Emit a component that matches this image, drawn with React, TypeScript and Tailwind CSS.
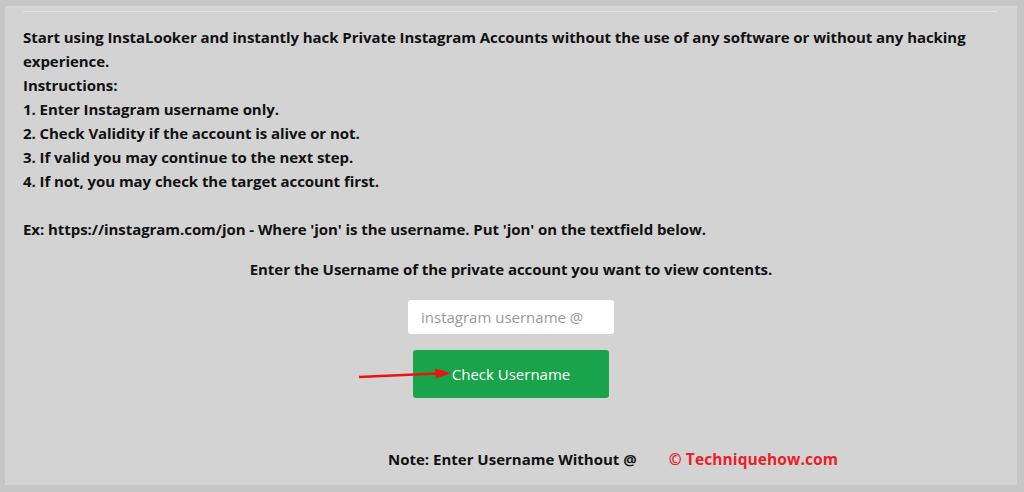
export default function App() {
  const font = { fontFamily: "'Open Sans', 'Noto Sans', sans-serif" };
  return (
    <div className="w-[1024px] h-[492px] bg-[#c6c6c6] pt-[6px] pl-[5px] pr-[7px] pb-[7px]" style={font}>
      <div className="h-full bg-[#d3d3d3] px-[18px] pt-[5px]">
        <div className="h-[1px] bg-[#e4e4e4] mr-[2px]" />
        <div className="pt-[13px] text-[15px] leading-[24px] font-bold text-[#111] tracking-[-0.06px]">
          <p>
            Start using InstaLooker and instantly hack Private Instagram Accounts without the use of any software or without any hacking
            experience.
          </p>
          <p>Instructions:</p>
          <p>1. Enter Instagram username only.</p>
          <p>2. Check Validity if the account is alive or not.</p>
          <p>3. If valid you may continue to the next step.</p>
          <p>4. If not, you may check the target account first.</p>
          <p className="h-[24px]" />
          <p>Ex: https://instagram.com/jon - Where 'jon' is the username. Put 'jon' on the textfield below.</p>
        </div>
        <p className="mt-[16px] text-center text-[15px] leading-[24px] font-bold text-[#111] tracking-[-0.06px]">
          Enter the Username of the private account you want to view contents.
        </p>
        <div className="flex flex-col items-center mt-[19px]">
          <input
            className="w-[206px] h-[34px] bg-white rounded-[3px] px-[13px] text-[15px] text-[#555] placeholder:text-[#9a9a9a] outline-none"
            placeholder="instagram username @"
          />
          <div className="relative mt-[16px]">
            <button className="w-[196px] h-[48px] bg-[#19a34a] rounded-[3px] text-white text-[15px]">Check Username</button>
            <svg className="absolute left-[-56px] top-[16px]" width="96" height="14" viewBox="0 0 96 14">
              <line x1="2" y1="11" x2="80" y2="7.5" stroke="#ee1111" strokeWidth="2.5" />
              <polygon points="94,7 78,2.5 79,12.5" fill="#ee1111" />
            </svg>
          </div>
        </div>
        <div className="flex mt-[49px] pl-[365px] text-[15px] font-bold leading-[24px]">
          <span className="text-[#111]">Note: Enter Username Without @</span>
          <span className="ml-[32px] text-[15.5px] text-[#e8202a] tracking-[0.1px]">© Techniquehow.com</span>
        </div>
      </div>
    </div>
  );
}
